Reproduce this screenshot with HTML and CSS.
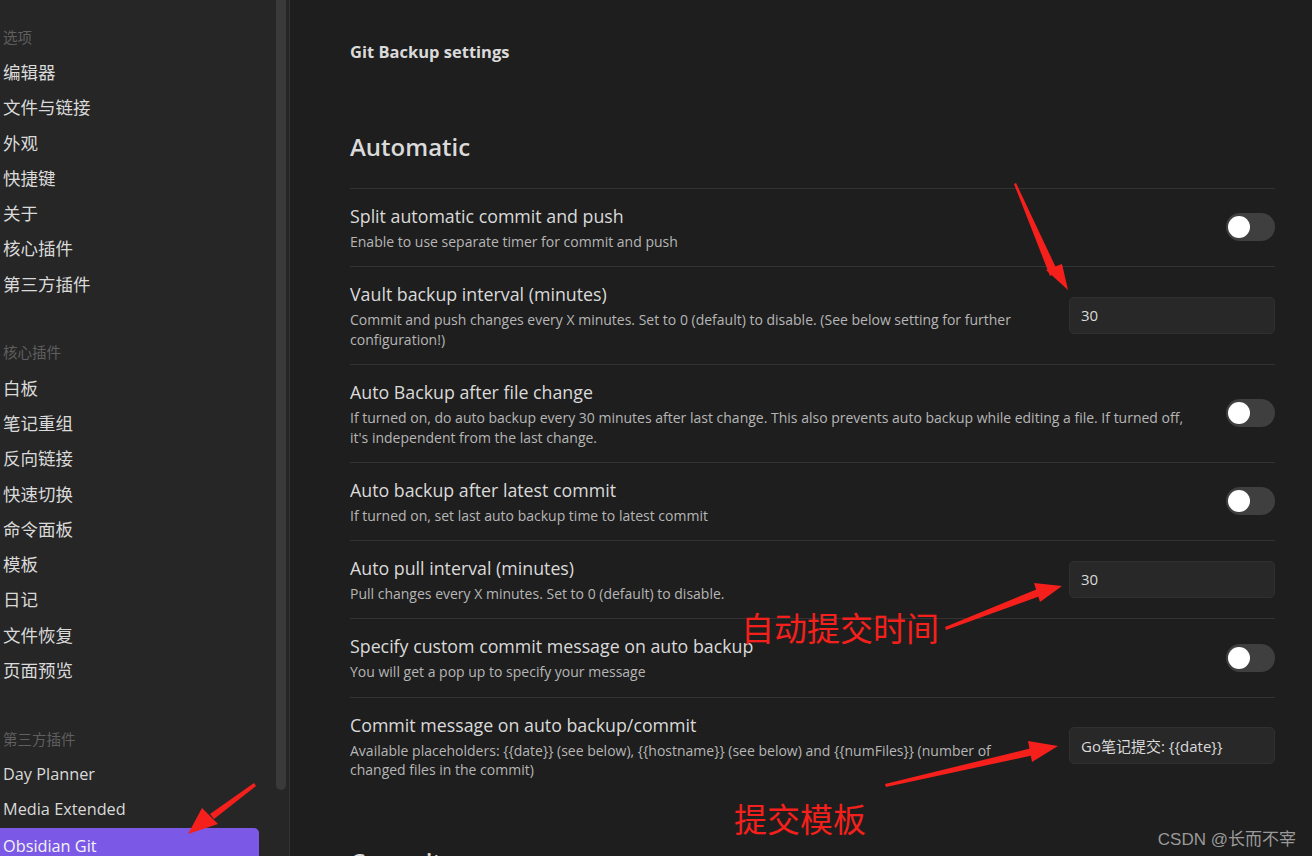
FILE: index.html
```html
<!DOCTYPE html>
<html lang="zh">
<head>
<meta charset="utf-8">
<title>Git Backup settings</title>
<link rel="stylesheet" href="styles.css">
</head>
<body>
<div class="app">
  <aside class="sidebar">
    <nav class="nav">
      <div class="nav-group">
        <div class="nav-header">选项</div>
        <div class="nav-item">编辑器</div>
        <div class="nav-item">文件与链接</div>
        <div class="nav-item">外观</div>
        <div class="nav-item">快捷键</div>
        <div class="nav-item">关于</div>
        <div class="nav-item">核心插件</div>
        <div class="nav-item">第三方插件</div>
      </div>
      <div class="nav-group">
        <div class="nav-header">核心插件</div>
        <div class="nav-item">白板</div>
        <div class="nav-item">笔记重组</div>
        <div class="nav-item">反向链接</div>
        <div class="nav-item">快速切换</div>
        <div class="nav-item">命令面板</div>
        <div class="nav-item">模板</div>
        <div class="nav-item">日记</div>
        <div class="nav-item">文件恢复</div>
        <div class="nav-item">页面预览</div>
      </div>
      <div class="nav-group">
        <div class="nav-header">第三方插件</div>
        <div class="nav-item latin">Day Planner</div>
        <div class="nav-item latin">Media Extended</div>
        <div class="nav-item latin active">Obsidian Git</div>
      </div>
    </nav>
    <div class="scrollbar"><div class="thumb"></div></div>
  </aside>
  <main class="content">
    <h2 class="page-title">Git Backup settings</h2>
    <h3 class="section-title">Automatic</h3>
    <div class="setting">
      <div class="info">
        <div class="name">Split automatic commit and push</div>
        <div class="desc">Enable to use separate timer for commit and push</div>
      </div>
      <div class="toggle"><span class="knob"></span></div>
    </div>
    <div class="setting">
      <div class="info">
        <div class="name">Vault backup interval (minutes)</div>
        <div class="desc">Commit and push changes every X minutes. Set to 0 (default) to disable. (See below setting for further configuration!)</div>
      </div>
      <div class="input">30</div>
    </div>
    <div class="setting">
      <div class="info">
        <div class="name">Auto Backup after file change</div>
        <div class="desc">If turned on, do auto backup every 30 minutes after last change. This also prevents auto backup while editing a file. If turned off, it's independent from the last change.</div>
      </div>
      <div class="toggle"><span class="knob"></span></div>
    </div>
    <div class="setting">
      <div class="info">
        <div class="name">Auto backup after latest commit</div>
        <div class="desc">If turned on, set last auto backup time to latest commit</div>
      </div>
      <div class="toggle"><span class="knob"></span></div>
    </div>
    <div class="setting">
      <div class="info">
        <div class="name">Auto pull interval (minutes)</div>
        <div class="desc">Pull changes every X minutes. Set to 0 (default) to disable.</div>
      </div>
      <div class="input">30</div>
    </div>
    <div class="setting">
      <div class="info">
        <div class="name">Specify custom commit message on auto backup</div>
        <div class="desc">You will get a pop up to specify your message</div>
      </div>
      <div class="toggle"><span class="knob"></span></div>
    </div>
    <div class="setting">
      <div class="info">
        <div class="name">Commit message on auto backup/commit</div>
        <div class="desc">Available placeholders: {{date}} (see below), {{hostname}} (see below) and {{numFiles}} (number of changed files in the commit)</div>
      </div>
      <div class="input">Go笔记提交: {{date}}</div>
    </div>
    <h3 class="section-title next">Commit</h3>
  </main>
</div>

<svg class="annotations" width="1312" height="856" viewBox="0 0 1312 856" aria-hidden="true">
  <g fill="#f5201c">
    <polygon points="1014,184 1016,183 1058,272 1050,276"/>
    <polygon points="1046,270 1062,264 1068,290"/>
    <polygon points="946,630 945,627 1040,588 1043,595"/>
    <polygon points="1034,583 1062,586 1040,602"/>
    <polygon points="886,787 885,784 1032,748 1034,755"/>
    <polygon points="1028,741 1058,746 1032,762"/>
    <polygon points="256,786 254,783 210,814 214,819"/>
    <polygon points="202,808 188,834 218,824"/>
  </g>
  <text x="741" y="641" class="anno">自动提交时间</text>
  <text x="734" y="832" class="anno">提交模板</text>
</svg>
<div class="watermark">CSDN @长而不宰</div>
</body>
</html>
```
FILE: styles.css
```css
* { box-sizing: border-box; }
html, body {
  margin: 0;
  padding: 0;
  width: 1312px;
  height: 856px;
  overflow: hidden;
  background: #1e1e1e;
  font-family: "Open Sans", "Noto Sans CJK SC", sans-serif;
  color: #dadada;
}
.app {
  display: flex;
  height: 856px;
}
.sidebar {
  width: 290px;
  flex: none;
  display: flex;
  background: #262626;
  border-right: 1px solid #333;
  position: relative;
}
.nav {
  width: 276px;
  padding-top: 18px;
  display: flex;
  flex-direction: column;
  gap: 33px;
}
.nav-header {
  height: 36px;
  display: flex;
  align-items: center;
  padding-left: 3px;
  font-size: 14.5px;
  color: #5f5f5f;
  font-family: "Noto Sans CJK SC", sans-serif;
}
.nav-item {
  height: 35.25px;
  display: flex;
  align-items: center;
  padding-left: 3px;
  width: 259px;
  font-size: 17.5px;
  color: #dadada;
  font-family: "Open Sans", "Noto Sans CJK SC", sans-serif;
}
.nav-item.latin {
  font-size: 16.3px;
}
.nav-item.active {
  background: #7b59e6;
  border-radius: 0 5px 0 0;
  color: #f4f4f4;
  margin-top: 1.5px;
}
.scrollbar {
  width: 13px;
  padding: 0 2px 0 0;
}
.thumb {
  width: 10px;
  height: 790px;
  background: #3a3a3a;
  border-radius: 0 0 5px 5px;
}
.content {
  flex: 1;
  padding: 40px 37px 0 60px;
}
.page-title {
  margin: 0;
  font-size: 16.5px;
  font-weight: 700;
  line-height: 24px;
  color: #dadada;
}
.section-title {
  margin: 68px 0 26px;
  font-size: 24px;
  font-weight: 600;
  line-height: 30px;
  color: #dadada;
}
.section-title.next {
  margin-top: 52px;
}
.setting {
  display: flex;
  align-items: center;
  border-top: 1px solid #333;
  padding: 14px 0 14.8px;
}
.info {
  flex: 1;
  margin-right: 28px;
}
.name {
  font-size: 17.8px;
  line-height: 26px;
  color: #dadada;
}
.desc {
  margin-top: 3px;
  font-size: 14px;
  line-height: 19.5px;
  color: #b6b6b6;
}
.toggle {
  flex: none;
  width: 49px;
  height: 28px;
  border-radius: 14px;
  background: #3f3f3f;
  position: relative;
}
.knob {
  position: absolute;
  left: 2px;
  top: 3px;
  width: 22px;
  height: 22px;
  border-radius: 50%;
  background: #fff;
}
.input {
  flex: none;
  width: 206px;
  height: 37px;
  display: flex;
  align-items: center;
  padding-left: 11px;
  background: #282828;
  border: 1px solid #303030;
  border-radius: 5px;
  font-size: 15px;
  color: #dadada;
}
.annotations {
  position: absolute;
  left: 0;
  top: 0;
  pointer-events: none;
}
.anno {
  font-family: "Noto Sans CJK SC", sans-serif;
  font-size: 33px;
  fill: #f5201c;
}
.watermark {
  position: absolute;
  right: 16px;
  top: 825px;
  font-family: "Liberation Sans", "Noto Sans CJK SC", sans-serif;
  font-size: 17px;
  color: #9a9a9a;
}
```
